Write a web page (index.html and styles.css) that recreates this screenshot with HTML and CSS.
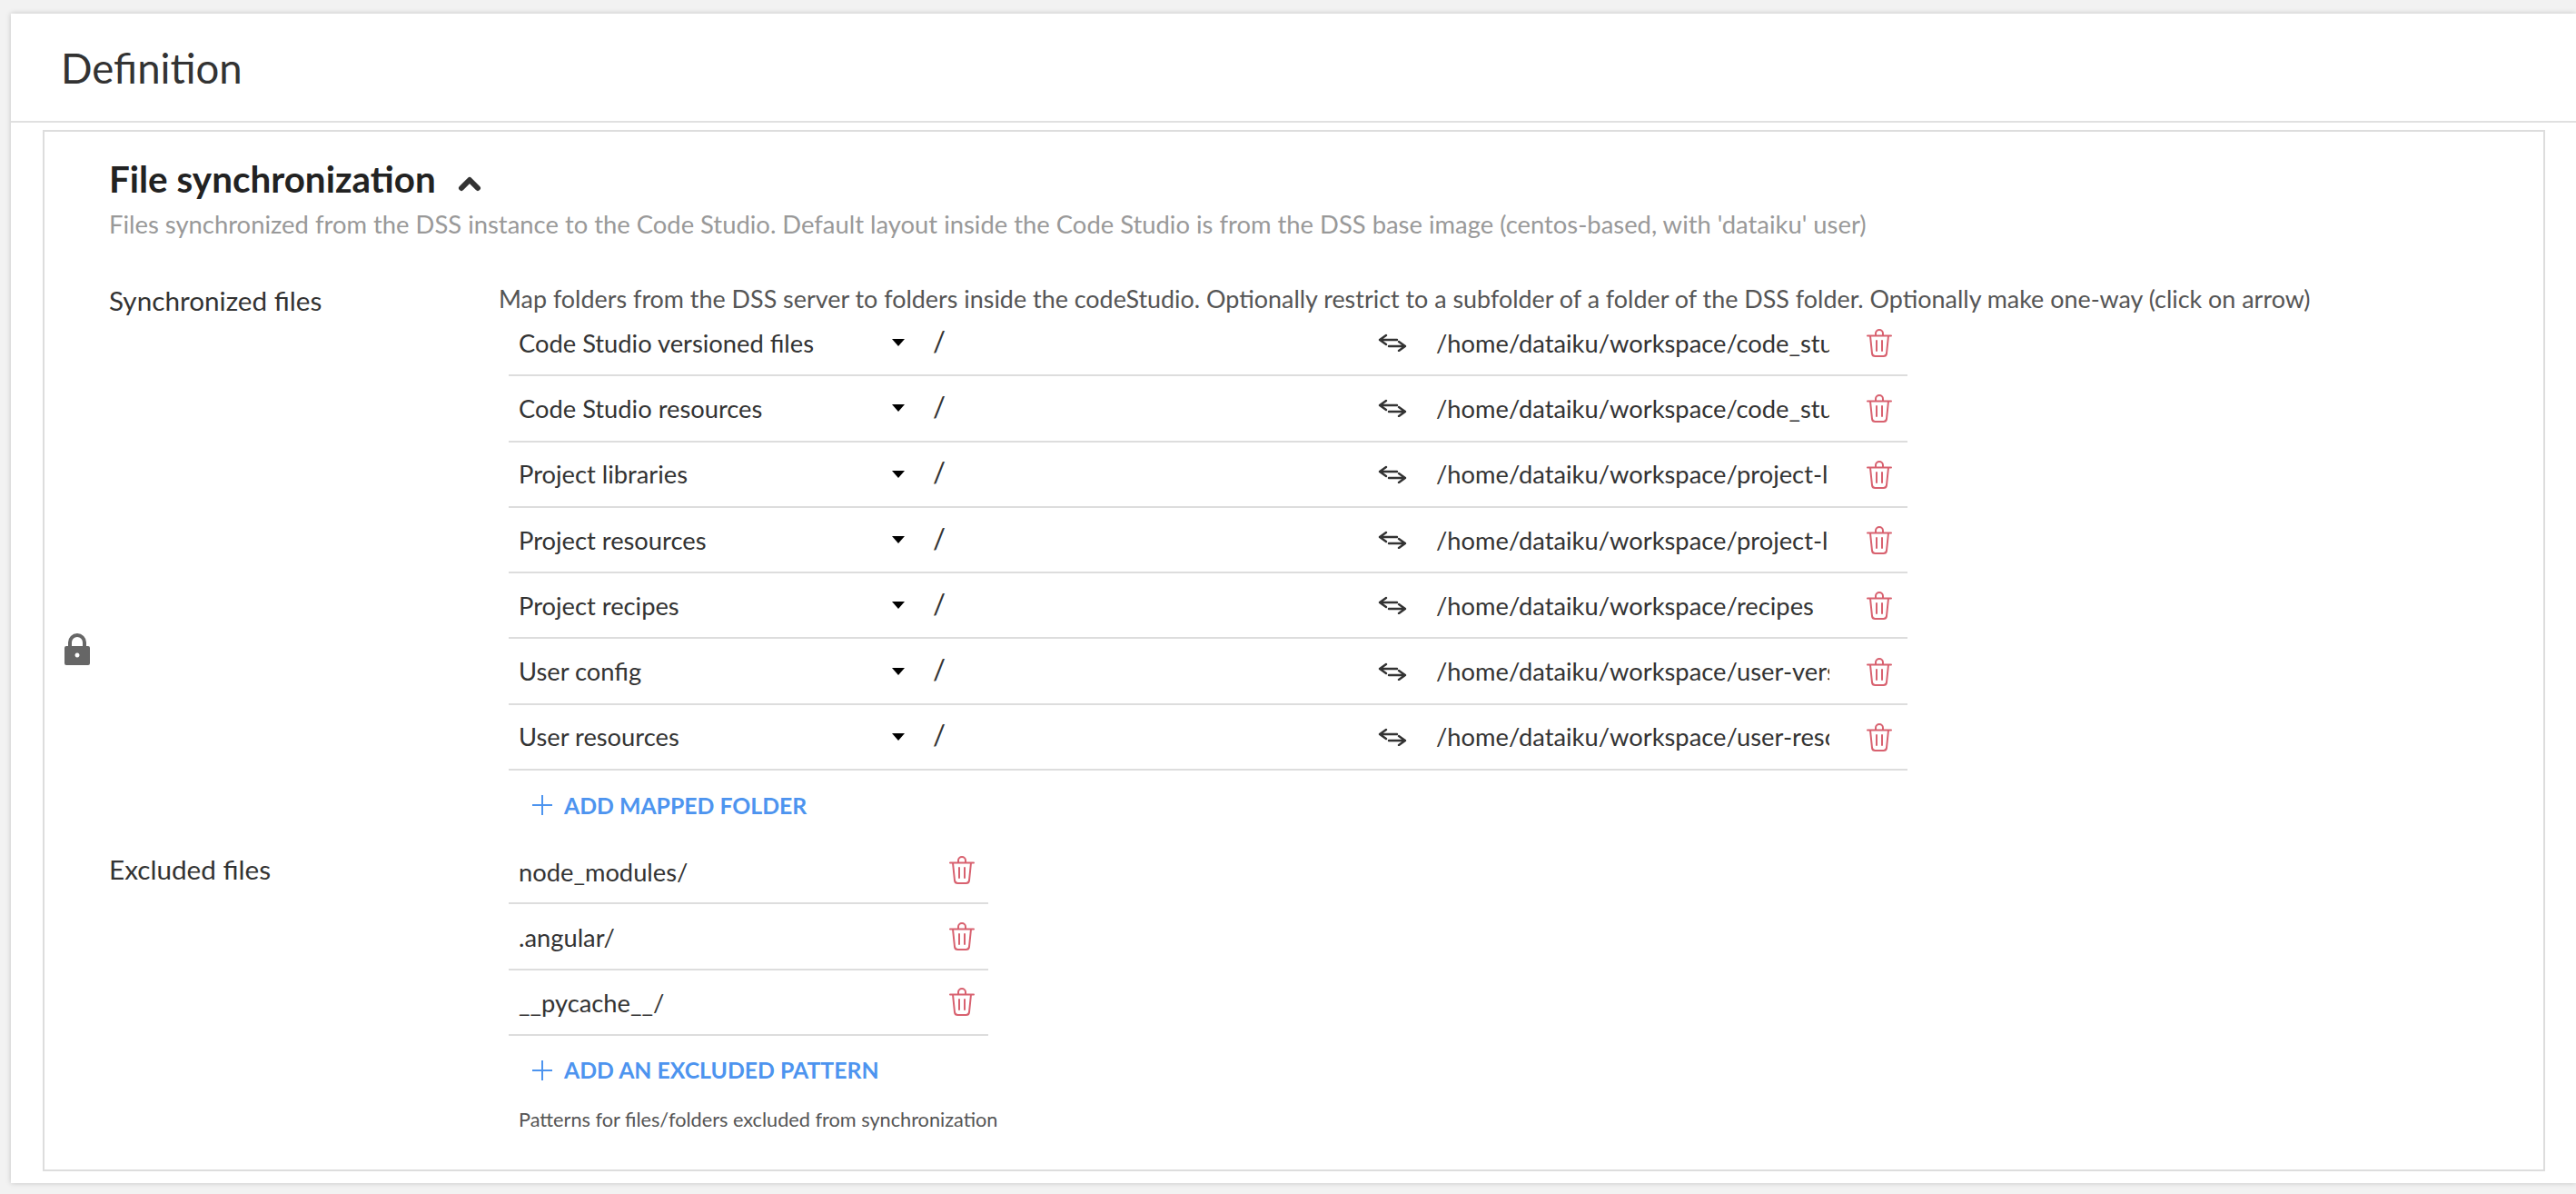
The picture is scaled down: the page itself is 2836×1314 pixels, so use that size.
FILE: index.html
```html
<!DOCTYPE html>
<html lang="en">
<head>
<meta charset="utf-8">
<title>Definition</title>
<link rel="stylesheet" href="styles.css">
</head>
<body>
<svg class="defs" width="0" height="0" aria-hidden="true">
  <symbol id="trash" viewBox="0 0 28 32">
    <path d="M1 7.500h26M10 7.500V5a4 4 0 0 1 8 0v2.500M4 7.500l2 19.500a3.500 3.500 0 0 0 3.500 3h9a3.500 3.500 0 0 0 3.500-3l2-19.500M11 13v11M17 13v11" fill="none" stroke="currentColor" stroke-width="2" stroke-linecap="round" stroke-linejoin="round"/>
  </symbol>
  <symbol id="swap" viewBox="0 0 32 20">
    <path d="M9 2 2 7l7 5M2 7h19M23 9l7 5-7 5M30 14H12" fill="none" stroke="currentColor" stroke-width="2.400" stroke-linecap="round" stroke-linejoin="round"/>
  </symbol>
  <symbol id="plus" viewBox="0 0 24 24">
    <path d="M12 1v22M1 12h22" fill="none" stroke="currentColor" stroke-width="2"/>
  </symbol>
</svg>
<main class="card">
  <header class="card-head"><h1>Definition</h1></header>
  <section class="box">
    <div class="lock-col">
      <svg class="lock" viewBox="0 0 28 35"><path fill-rule="evenodd" d="M2 14h2V10a10 10 0 0 1 20 0v4h2a2 2 0 0 1 2 2v17a2 2 0 0 1-2 2H2a2 2 0 0 1-2-2V16a2 2 0 0 1 2-2Zm6 0h12V10a6 6 0 0 0-12 0ZM14 21.500a2.500 2.500 0 1 0 .01 0Z" fill="#666"/></svg>
    </div>
    <div class="content">
      <h2 class="title">File synchronization
        <svg class="chevron" viewBox="0 0 26 18"><path d="M4 14 13 5l9 9" fill="none" stroke="#333" stroke-width="6" stroke-linecap="round" stroke-linejoin="round"/></svg>
      </h2>
      <p class="subtitle">Files synchronized from the DSS instance to the Code Studio. Default layout inside the Code Studio is from the DSS base image (centos-based, with 'dataiku' user)</p>

      <div class="field field-sync">
        <label class="field-label">Synchronized files</label>
        <div class="field-body">
          <p class="map-help">Map folders from the DSS server to folders inside the codeStudio. Optionally restrict to a subfolder of a folder of the DSS folder. Optionally make one-way (click on arrow)</p>
          <div class="rows rows-map">
            <div class="row"><span class="select">Code Studio versioned files</span><i class="caret"></i><span class="slash">/</span><svg class="swap"><use href="#swap"/></svg><span class="path">/home/dataiku/workspace/code_studio-versioned</span><svg class="trash"><use href="#trash"/></svg></div>
            <div class="row"><span class="select">Code Studio resources</span><i class="caret"></i><span class="slash">/</span><svg class="swap"><use href="#swap"/></svg><span class="path">/home/dataiku/workspace/code_studio-resources</span><svg class="trash"><use href="#trash"/></svg></div>
            <div class="row"><span class="select">Project libraries</span><i class="caret"></i><span class="slash">/</span><svg class="swap"><use href="#swap"/></svg><span class="path">/home/dataiku/workspace/project-lib-versioned</span><svg class="trash"><use href="#trash"/></svg></div>
            <div class="row"><span class="select">Project resources</span><i class="caret"></i><span class="slash">/</span><svg class="swap"><use href="#swap"/></svg><span class="path">/home/dataiku/workspace/project-lib-resources</span><svg class="trash"><use href="#trash"/></svg></div>
            <div class="row"><span class="select">Project recipes</span><i class="caret"></i><span class="slash">/</span><svg class="swap"><use href="#swap"/></svg><span class="path">/home/dataiku/workspace/recipes</span><svg class="trash"><use href="#trash"/></svg></div>
            <div class="row"><span class="select">User config</span><i class="caret"></i><span class="slash">/</span><svg class="swap"><use href="#swap"/></svg><span class="path">/home/dataiku/workspace/user-versioned</span><svg class="trash"><use href="#trash"/></svg></div>
            <div class="row"><span class="select">User resources</span><i class="caret"></i><span class="slash">/</span><svg class="swap"><use href="#swap"/></svg><span class="path">/home/dataiku/workspace/user-resources</span><svg class="trash"><use href="#trash"/></svg></div>
          </div>
          <button class="add"><svg class="plus"><use href="#plus"/></svg>ADD MAPPED FOLDER</button>
        </div>
      </div>

      <div class="field field-excl">
        <label class="field-label">Excluded files</label>
        <div class="field-body">
          <div class="rows rows-excl">
            <div class="row"><span class="pattern">node_modules/</span><svg class="trash"><use href="#trash"/></svg></div>
            <div class="row"><span class="pattern">.angular/</span><svg class="trash"><use href="#trash"/></svg></div>
            <div class="row"><span class="pattern">__pycache__/</span><svg class="trash"><use href="#trash"/></svg></div>
          </div>
          <button class="add"><svg class="plus"><use href="#plus"/></svg>ADD AN EXCLUDED PATTERN</button>
          <p class="help">Patterns for files/folders excluded from synchronization</p>
        </div>
      </div>
    </div>
  </section>
</main>
</body>
</html>
```
FILE: styles.css
```css
* { box-sizing: border-box; }
html, body { margin: 0; height: 100%; }
body {
  background: #f2f2f2;
  padding: 15px 0 12px 12px;
  font-family: "Lato", "Noto Sans", sans-serif;
  color: #333;
  overflow: hidden;
}
.defs { position: absolute; }
.card {
  background: #fff;
  height: 1287px;
  box-shadow: 0 0 6px rgba(0, 0, 0, .2);
  display: flex;
  flex-direction: column;
}
.card-head {
  height: 120px;
  border-bottom: 2px solid #e0e0e0;
  display: flex;
  align-items: center;
  padding-left: 55px;
}
.card-head h1 {
  margin: 0;
  font-size: 45.500px;
  font-weight: 400;
  color: #333;
}
.box {
  margin: 8px 34px 0 35px;
  height: 1146px;
  border: 2px solid #ddd;
  display: flex;
}
.lock-col {
  width: 71px;
  flex: none;
  display: flex;
  align-items: center;
  justify-content: center;
}
.lock { width: 28px; height: 35px; display: block; margin-bottom: 3px; }
.content { flex: 1; padding-top: 27px; }
.title {
  margin: 0;
  font-size: 40.400px;
  line-height: 50px;
  font-weight: 700;
  color: #222;
  display: flex;
  align-items: center;
  gap: 24px;
}
.chevron { width: 26px; height: 18px; margin-top: 10px; }
.subtitle {
  margin: 7px 0 0;
  font-size: 27.400px;
  line-height: 36px;
  color: #999;
}
.field { display: flex; }
.field-label {
  width: 429px;
  flex: none;
  font-size: 29.700px;
  line-height: 36px;
  color: #333;
}
.field-body { flex: none; }
.field-sync { margin-top: 47px; }
.field-sync .field-label { margin-top: 1px; }
.map-help {
  margin: 3px 0 0;
  font-size: 26.900px;
  line-height: 27px;
  white-space: nowrap;
  color: #555;
}
.rows { margin-left: 11px; }
.rows-map { width: 1540px; }
.rows-excl { width: 528px; }
.row {
  height: 72.300px;
  border-bottom: 2px solid #ddd;
  display: flex;
  align-items: center;
  padding-left: 11px;
  font-size: 27.300px;
  color: #333;
}
.select { width: 411px; flex: none; white-space: nowrap; }
.caret {
  flex: none;
  width: 0;
  height: 0;
  border: 7.500px solid transparent;
  border-top: 8px solid #000;
  border-bottom: 0;
}
.slash { margin: 0 0 5px 31px; width: 490px; flex: none; font-size: 31px; }
.swap { width: 32px; height: 20px; flex: none; color: #333; }
.path {
  margin-left: 32px;
  width: 433px;
  flex: none;
  overflow: hidden;
  white-space: nowrap;
}
.trash { width: 28px; height: 32px; flex: none; margin: 2px 0 0 41px; color: #d8616f; }
.pattern { width: 474px; flex: none; padding-top: 2px; }
.rows-excl .trash { margin: 0; }
.field-excl { margin-top: 17px; }
.field-excl .field-label { padding-top: 16px; }
.add {
  display: flex;
  align-items: center;
  margin: 18px 0 0 36px;
  padding: 0;
  height: 40px;
  background: none;
  border: 0;
  font: 700 24.800px "Lato", "Noto Sans", sans-serif;
  color: #4d94ef;
}
.plus { width: 24px; height: 24px; margin-right: 12px; color: #4d94ef; }
.help {
  margin: 19px 0 0 22px;
  font-size: 21.700px;
  line-height: 30px;
  color: #555;
  white-space: nowrap;
}
```
